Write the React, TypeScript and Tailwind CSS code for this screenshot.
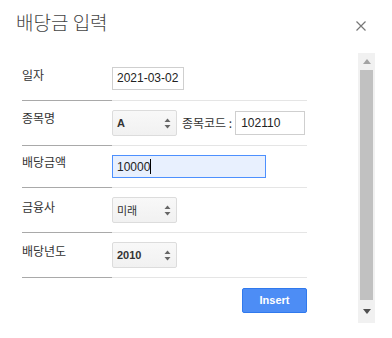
const ko = { fontFamily: '"Noto Sans CJK KR", "Liberation Sans", sans-serif' };
const ar = { fontFamily: '"Liberation Sans", Arial, sans-serif' };

function Arrows() {
  return (
    <svg width="7" height="11" viewBox="0 0 7 11" className="shrink-0">
      <path d="M3.5 0.5 L6.5 4 L0.5 4 Z" fill="#666" />
      <path d="M3.5 10.5 L6.5 7 L0.5 7 Z" fill="#666" />
    </svg>
  );
}

function FakeSelect({ value, bold = true }: { value: string; bold?: boolean }) {
  return (
    <div className="flex items-center justify-between w-[65px] h-[26px] pl-[4px] pr-[5px] rounded-[2px] border border-[#dcdcdc] bg-gradient-to-b from-[#f8f8f8] to-[#f1f1f1]">
      <span
        className={`text-[11px] text-[#333] ${bold ? "font-bold" : ""}`}
        style={bold ? ar : ko}
      >
        {value}
      </span>
      <Arrows />
    </div>
  );
}

function Row({ label, h, pt, children }: { label: string; h: string; pt: string; children: React.ReactNode }) {
  return (
    <div className={`flex ${h}`}>
      <div className={`w-[90px] border-b border-[#a9a9a9] ${pt} text-[12px] leading-[16px] text-[#333]`} style={ko}>
        {label}
      </div>
      <div className="flex-1 flex items-center border-b border-[#e5e5e5]">{children}</div>
    </div>
  );
}

export default function App() {
  return (
    <div className="w-[392px] h-[338px] bg-white overflow-hidden">
      <div className="flex justify-between items-start h-[53px] pl-[16px] pr-[26px]">
        <div className="pt-[8px] text-[19px] leading-[28px] text-[#444] font-light" style={ko}>
          배당금 입력
        </div>
        <svg width="10" height="10" viewBox="0 0 10 10" className="mt-[21px]">
          <path d="M0.5 0.5 L9.5 9.5 M9.5 0.5 L0.5 9.5" stroke="#777" strokeWidth="1.2" />
        </svg>
      </div>

      <div className="flex h-[270px]">
        <div className="w-[358px] pl-[22px] pt-[4px]">
          <div className="w-[285px]">
            <Row label="일자" h="h-[44px]" pt="pt-[10px]">
              <div className="w-[72px] h-[23px] border border-[#cfcfcf] pl-[4px] whitespace-nowrap text-[12px] leading-[21px] text-[#222]" style={ar}>
                2021-03-02
              </div>
            </Row>
            <Row label="종목명" h="h-[45px]" pt="pt-[9px]">
              <FakeSelect value="A" />
              <span className="ml-[5px] text-[12px] text-[#333] whitespace-nowrap" style={ko}>
                종목코드 :
              </span>
              <div className="ml-[3px] w-[70px] h-[24px] border border-[#cfcfcf] pl-[5px] text-[12px] leading-[22px] text-[#222]" style={ar}>
                102110
              </div>
            </Row>
            <Row label="배당금액" h="h-[42px]" pt="pt-[8px]">
              <div className="flex items-center w-[154px] h-[23px] border border-[#4d90fe] bg-[#e8f0fe] pl-[4px] text-[12px] text-[#222]" style={ar}>
                10000
                <span className="w-px h-[15px] bg-black" />
              </div>
            </Row>
            <Row label="금융사" h="h-[45px]" pt="pt-[11px]">
              <FakeSelect value="미래" bold={false} />
            </Row>
            <Row label="배당년도" h="h-[45px]" pt="pt-[10px]">
              <FakeSelect value="2010" />
            </Row>
            <div className="flex justify-end mt-[10px]">
              <button
                className="w-[65px] h-[25px] rounded-[2px] border border-[#3079ed] bg-[#4d8df5] text-white text-[11px] font-bold"
                style={ar}
              >
                Insert
              </button>
            </div>
          </div>
        </div>

        <div className="w-[17px] bg-[#f1f1f1] flex flex-col items-center">
          <div className="h-[17px] flex items-center justify-center">
            <svg width="8" height="5" viewBox="0 0 8 5">
              <path d="M4 0 L8 5 L0 5 Z" fill="#a3a3a3" />
            </svg>
          </div>
          <div className="w-[13px] h-[230px] bg-[#c1c1c1]" />
          <div className="flex-1 flex items-center justify-center">
            <svg width="8" height="5" viewBox="0 0 8 5">
              <path d="M0 0 L8 0 L4 5 Z" fill="#505050" />
            </svg>
          </div>
        </div>
      </div>
    </div>
  );
}
